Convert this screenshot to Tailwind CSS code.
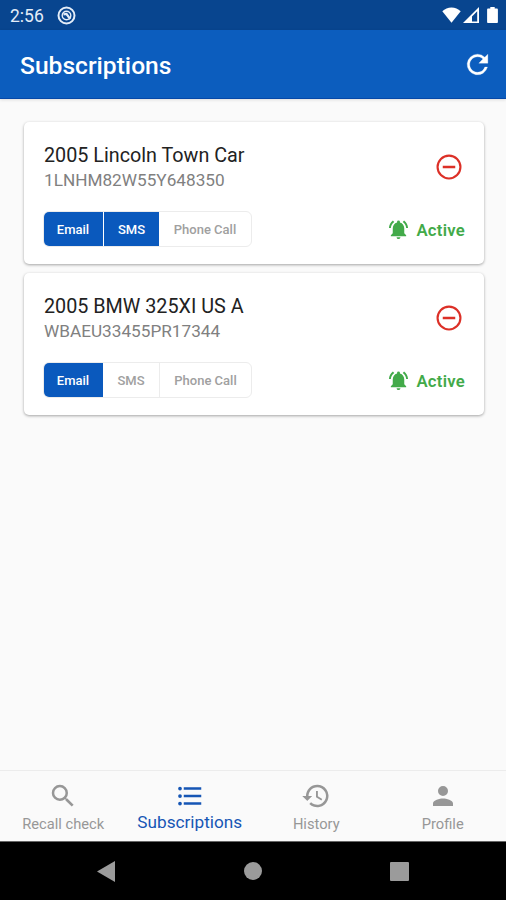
<!DOCTYPE html>
<html lang="en">

	<head>
		<meta charset="UTF-8" />
		<meta name="viewport" content="width=device-width, initial-scale=1.0" />
		<title>Subscriptions</title>
		<script src="https://cdn.jsdelivr.net/npm/@tailwindcss/browser@4"></script>
	</head>

	<body class="bg-[#fafafa] h-screen flex flex-col overflow-hidden font-[Roboto,sans-serif]">
		<!-- Status bar -->
		<div class="h-[30px] shrink-0 bg-[#08458f] text-[#e4edf8] flex items-center pl-2.5 pr-2 pt-0.5">
			<p class="text-[17.5px] leading-none pt-0.5">2:56</p>
			<svg class="w-[19px] h-[19px] ml-[13px] -mt-0.5" viewBox="0 0 19 19" fill="none" stroke="currentColor">
				<circle cx="9.5" cy="9.5" r="8" stroke-width="2"></circle>
				<circle cx="9.5" cy="9.5" r="4.3" stroke-width="1.4"></circle>
				<path d="M6.5 8.3 9.5 8l3.7 5" stroke-width="2.2"></path>
			</svg>
			<div class="flex items-center ml-auto -mt-0.5 text-white">
				<svg class="w-[19px] h-4" viewBox="0 0 19 16" fill="currentColor">
					<path d="M9.5 15.7 0.3 4.3C2.8 1.8 6 0.4 9.5 0.4s6.7 1.4 9.2 3.9z"></path>
				</svg>
				<svg class="w-4 h-4 ml-0.5" viewBox="0 0 16 16" fill="currentColor" fill-rule="evenodd">
					<path d="M0 16 16 0v16zM9 14.5h5.2V4.2L9 9.4z"></path>
				</svg>
				<svg class="w-[11px] h-4 ml-2" viewBox="0 0 11 16" fill="currentColor">
					<path d="M3.3 0h4.4v1.6h2.1c.6 0 1.1.5 1.1 1.1v12.2c0 .6-.5 1.1-1.1 1.1H1.2c-.6 0-1.1-.5-1.1-1.1V2.7c0-.6.5-1.1 1.1-1.1h2.1z"></path>
				</svg>
			</div>
		</div>

		<!-- App bar -->
		<header class="h-[69px] shrink-0 bg-[#0c5dbe] border-b border-[#0648a8] text-white flex items-center justify-between pl-5 pr-[13px] pt-px shadow-[0_1px_3px_rgba(0,0,0,0.12)]">
			<h1 class="text-[24.6px] font-medium leading-none pt-[3px]">Subscriptions</h1>
			<svg class="w-[31px] h-[31px]" viewBox="0 0 24 24" fill="currentColor" stroke="currentColor" stroke-width="0.2">
				<path d="M17.65 6.35A7.958 7.958 0 0 0 12 4a8 8 0 1 0 7.73 10h-2.08A5.99 5.99 0 0 1 12 18a6 6 0 1 1 4.22-10.22L13 11h7V4z"></path>
			</svg>
		</header>

		<main class="grow flex flex-col gap-[9px] pl-6 pr-[22px] pt-[23px]">
			<section class="h-[142px] bg-white rounded-[5px] shadow-[0_1px_3px_rgba(0,0,0,0.35)] flex justify-between pl-5 pr-[19px]">
				<div>
					<h2 class="mt-[21px] text-[19.75px] leading-[26px] text-[#222] whitespace-nowrap">2005 Lincoln Town Car</h2>
					<p class="-mt-px text-[17.2px] leading-6 text-[#808080]">1LNHM82W55Y648350</p>
					<div class="mt-[19px] -ml-px h-9 w-[209px] flex text-[13px] font-medium border border-[#ececec] rounded-md overflow-hidden">
						<button class="w-[60px] pt-0.5 pr-px bg-[#0a59bd] text-white border-r border-white">Email</button>
						<button class="w-[55px] pt-0.5 bg-[#0a59bd] text-white">SMS</button>
						<button class="grow pt-0.5 text-[#a0a0a0] whitespace-nowrap">Phone Call</button>
					</div>
				</div>
				<div class="flex flex-col items-end">
					<svg class="w-[30px] h-[30px] mt-[30px] mr-px text-[#dc3027]" viewBox="0 0 24 24" fill="currentColor">
						<path d="M7 11v2h10v-2zm5-9a10 10 0 1 0 0 20 10 10 0 0 0 0-20zm0 18.3a8.3 8.3 0 1 1 0-16.6 8.3 8.3 0 0 1 0 16.6z"></path>
					</svg>
					<div class="mt-9 h-6 flex items-center gap-1.5 text-[#42aa49]">
						<svg class="w-[23px] h-[23px] -mt-px" viewBox="0 0 24 24" fill="currentColor">
							<path d="M7.58 4.08 6.15 2.65C3.75 4.48 2.17 7.3 2.03 10.5h2a8.445 8.445 0 0 1 3.55-6.42zm12.39 6.42h2c-.15-3.2-1.73-6.02-4.12-7.85l-1.42 1.43a8.495 8.495 0 0 1 3.54 6.42zM18 11c0-3.07-1.64-5.64-4.5-6.32V4a1.5 1.5 0 0 0-3 0v.68C7.63 5.36 6 7.92 6 11v5l-2 2v1h16v-1l-2-2zm-6 11c1.1 0 2-.9 2-2h-4a2 2 0 0 0 2 2z"></path>
						</svg>
						<span class="pt-0.5 text-[16.7px] font-semibold tracking-[0.25px] leading-none">Active</span>
					</div>
				</div>
			</section>

			<section class="h-[142px] bg-white rounded-[5px] shadow-[0_1px_3px_rgba(0,0,0,0.35)] flex justify-between pl-5 pr-[19px]">
				<div>
					<h2 class="mt-[21px] text-[19.75px] leading-[26px] text-[#222] whitespace-nowrap">2005 BMW 325XI US A</h2>
					<p class="-mt-px text-[17.2px] leading-6 text-[#808080]">WBAEU33455PR17344</p>
					<div class="mt-[19px] -ml-px h-9 w-[209px] flex text-[13px] font-medium border border-[#ececec] rounded-md overflow-hidden">
						<button class="w-[59px] pt-0.5 pr-px bg-[#0a59bd] text-white">Email</button>
						<button class="w-[57px] pt-0.5 text-[#a0a0a0] border-r border-[#ececec]">SMS</button>
						<button class="grow pt-0.5 text-[#a0a0a0] whitespace-nowrap">Phone Call</button>
					</div>
				</div>
				<div class="flex flex-col items-end">
					<svg class="w-[30px] h-[30px] mt-[30px] mr-px text-[#dc3027]" viewBox="0 0 24 24" fill="currentColor">
						<path d="M7 11v2h10v-2zm5-9a10 10 0 1 0 0 20 10 10 0 0 0 0-20zm0 18.3a8.3 8.3 0 1 1 0-16.6 8.3 8.3 0 0 1 0 16.6z"></path>
					</svg>
					<div class="mt-9 h-6 flex items-center gap-1.5 text-[#42aa49]">
						<svg class="w-[23px] h-[23px] -mt-px" viewBox="0 0 24 24" fill="currentColor">
							<path d="M7.58 4.08 6.15 2.65C3.75 4.48 2.17 7.3 2.03 10.5h2a8.445 8.445 0 0 1 3.55-6.42zm12.39 6.42h2c-.15-3.2-1.73-6.02-4.12-7.85l-1.42 1.43a8.495 8.495 0 0 1 3.54 6.42zM18 11c0-3.07-1.64-5.64-4.5-6.32V4a1.5 1.5 0 0 0-3 0v.68C7.63 5.36 6 7.92 6 11v5l-2 2v1h16v-1l-2-2zm-6 11c1.1 0 2-.9 2-2h-4a2 2 0 0 0 2 2z"></path>
						</svg>
						<span class="pt-0.5 text-[16.7px] font-semibold tracking-[0.25px] leading-none">Active</span>
					</div>
				</div>
			</section>
		</main>

		<!-- Tabs -->
		<nav class="h-[71px] shrink-0 border-t border-[#ececec] grid grid-cols-4 text-[#979797] text-[14.7px] leading-5">
			<a class="flex flex-col items-center pt-2.5">
				<svg class="w-[30px] h-[30px]" viewBox="0 0 24 24" fill="currentColor">
					<path d="M15.5 14h-.79l-.28-.27A6.471 6.471 0 0 0 16 9.5 6.5 6.5 0 1 0 9.5 16c1.61 0 3.09-.59 4.23-1.57l.27.28v.79l5 4.99L20.49 19zm-6 0a4.5 4.5 0 1 1 0-9 4.5 4.5 0 0 1 0 9z"></path>
				</svg>
				<span class="mt-[3px]">Recall check</span>
			</a>
			<a class="flex flex-col items-center pt-2.5 text-[#1656b5]">
				<svg class="w-[30px] h-[30px]" viewBox="0 0 24 24" fill="currentColor">
					<path d="M4 10.5a1.5 1.5 0 1 0 0 3 1.5 1.5 0 0 0 0-3zm0-6a1.5 1.5 0 1 0 0 3 1.5 1.5 0 0 0 0-3zm0 12a1.5 1.5 0 1 0 0 3 1.5 1.5 0 0 0 0-3zM7 19h14v-2H7zm0-6h14v-2H7zm0-8v2h14V5z"></path>
				</svg>
				<span class="mt-px text-[17.2px]">Subscriptions</span>
			</a>
			<a class="flex flex-col items-center pt-2.5">
				<svg class="w-[30px] h-[30px]" viewBox="0 0 24 24" fill="currentColor">
					<path d="M13 3a9 9 0 0 0-9 9H1l3.89 3.89.07.14L9 12H6a7 7 0 1 1 2.06 4.94l-1.42 1.42A9 9 0 1 0 13 3zm-1 5v5l4.28 2.54.72-1.21-3.5-2.08V8z"></path>
				</svg>
				<span class="mt-[3px]">History</span>
			</a>
			<a class="flex flex-col items-center pt-2.5">
				<svg class="w-[30px] h-[30px]" viewBox="0 0 24 24" fill="currentColor">
					<path d="M12 12a4 4 0 1 0 0-8 4 4 0 0 0 0 8zm0 2c-2.67 0-8 1.34-8 4v2h16v-2c0-2.66-5.33-4-8-4z"></path>
				</svg>
				<span class="mt-[3px]">Profile</span>
			</a>
		</nav>

		<!-- System navigation -->
		<div class="h-[59px] shrink-0 bg-black border-t border-[#666] flex items-center justify-between px-[97px] text-[#9b9b9b]">
			<svg class="w-[18px] h-[21px]" viewBox="0 0 18 21" fill="currentColor">
				<path d="M18 0v21L0 10.5z"></path>
			</svg>
			<div class="size-[18px] rounded-full bg-[#9b9b9b]"></div>
			<div class="size-[19px] rounded-[1px] bg-[#9b9b9b]"></div>
		</div>
	</body>

</html>
